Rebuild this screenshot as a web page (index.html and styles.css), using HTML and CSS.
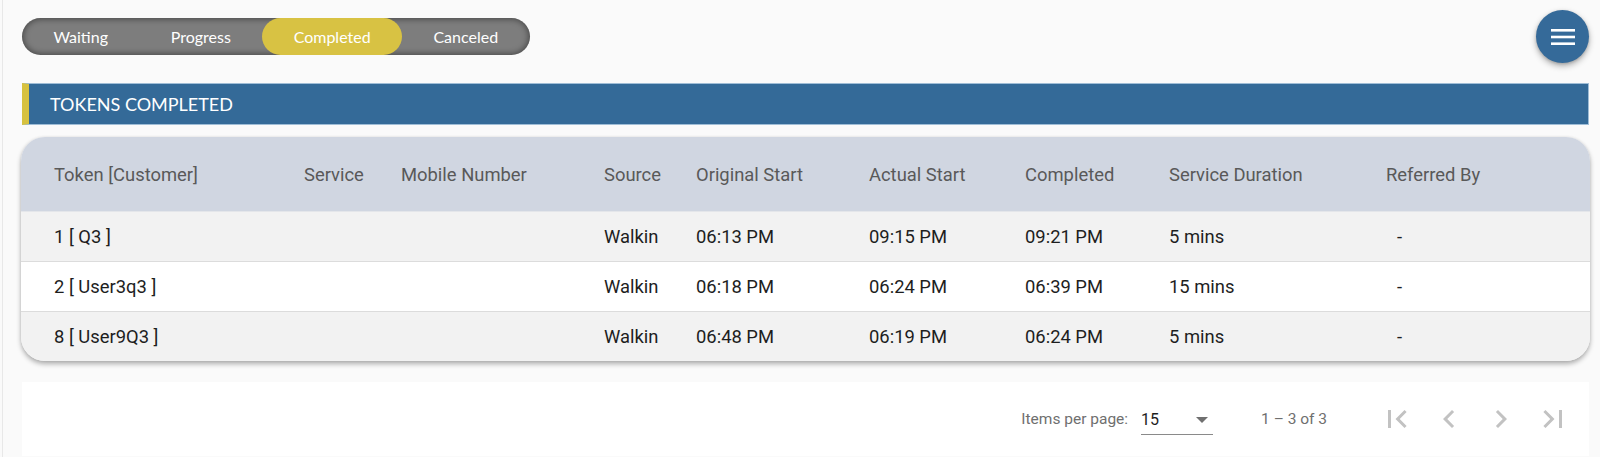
FILE: index.html
```html
<!DOCTYPE html>
<html>
<head>
<meta charset="utf-8">
<link rel="stylesheet" href="styles.css">
</head>
<body>
<div class="page">
  <div class="topbar">
    <div class="toggle">
      <span class="seg">Waiting</span>
      <span class="seg">Progress</span>
      <span class="seg active">Completed</span>
      <span class="seg">Canceled</span>
    </div>
  </div>
  <button class="fab" aria-label="menu">
    <svg width="24" height="18" viewBox="0 0 24 18"><rect x="0" y="1" width="24" height="2.6" fill="#fff"/><rect x="0" y="7.7" width="24" height="2.6" fill="#fff"/><rect x="0" y="14.4" width="24" height="2.6" fill="#fff"/></svg>
  </button>

  <div class="section-title">TOKENS COMPLETED</div>

  <div class="card">
    <div class="row head">
      <div>Token [Customer]</div>
      <div>Service</div>
      <div>Mobile Number</div>
      <div>Source</div>
      <div>Original Start</div>
      <div>Actual Start</div>
      <div>Completed</div>
      <div>Service Duration</div>
      <div>Referred By</div>
    </div>
    <div class="row odd">
      <div>1 [ Q3 ]</div>
      <div></div>
      <div></div>
      <div>Walkin</div>
      <div>06:13 PM</div>
      <div>09:15 PM</div>
      <div>09:21 PM</div>
      <div>5 mins</div>
      <div class="ref">-</div>
    </div>
    <div class="row even">
      <div>2 [ User3q3 ]</div>
      <div></div>
      <div></div>
      <div>Walkin</div>
      <div>06:18 PM</div>
      <div>06:24 PM</div>
      <div>06:39 PM</div>
      <div>15 mins</div>
      <div class="ref">-</div>
    </div>
    <div class="row odd last">
      <div>8 [ User9Q3 ]</div>
      <div></div>
      <div></div>
      <div>Walkin</div>
      <div>06:48 PM</div>
      <div>06:19 PM</div>
      <div>06:24 PM</div>
      <div>5 mins</div>
      <div class="ref">-</div>
    </div>
  </div>

  <div class="paginator">
    <span class="label">Items per page:</span>
    <div class="select">
      <span class="value">15</span>
      <span class="arrow"></span>
    </div>
    <span class="range">1 – 3 of 3</span>
    <div class="navs">
      <span class="nav"><svg width="36" height="36" viewBox="0 0 24 24"><path d="M18.41 16.59L13.82 12l4.59-4.59L17 6l-6 6 6 6zM6 6h2v12H6z"/></svg></span>
      <span class="nav"><svg width="36" height="36" viewBox="0 0 24 24"><path d="M15.41 7.41L14 6l-6 6 6 6 1.41-1.41L10.83 12z"/></svg></span>
      <span class="nav"><svg width="36" height="36" viewBox="0 0 24 24"><path d="M10 6L8.59 7.41 13.17 12l-4.58 4.59L10 18l6-6z"/></svg></span>
      <span class="nav"><svg width="36" height="36" viewBox="0 0 24 24"><path d="M5.59 7.41L10.18 12l-4.59 4.59L7 18l6-6-6-6zM16 6h2v12h-2z"/></svg></span>
    </div>
  </div>
</div>
</body>
</html>
```

FILE: styles.css
```css
html, body {
  margin: 0;
  padding: 0;
  background: #fafafa;
}

.page {
  position: relative;
  margin-left: 2px;
  border-left: 1px solid #e8e8e8;
  padding: 18px 11px 0 19px;
  height: 457px;
  box-sizing: border-box;
  font-family: Roboto, "Liberation Sans", sans-serif;
}

.topbar {
  display: flex;
  align-items: center;
  height: 37px;
}

.toggle {
  display: inline-flex;
  height: 37px;
  border-radius: 19px;
  background: #7d7d7d;
  box-shadow: inset 0 0 6px 1px rgba(0, 0, 0, 0.45);
  font-family: Lato, "Open Sans", sans-serif;
  font-size: 16px;
  color: #ffffff;
}

.seg {
  display: flex;
  align-items: center;
  padding: 0 31.4px;
  border-radius: 19px;
}

.seg.active {
  background: #d8c243;
}

.fab {
  position: absolute;
  top: 10px;
  right: 11px;
  width: 53px;
  height: 53px;
  border-radius: 50%;
  border: none;
  padding: 0;
  background: #356a99;
  box-shadow: 0 3px 6px rgba(0, 0, 0, 0.3), 0 1px 3px rgba(0, 0, 0, 0.15);
  display: flex;
  align-items: center;
  justify-content: center;
}

.section-title {
  margin-top: 28px;
  height: 42px;
  box-sizing: border-box;
  background: #346a98;
  border: 1px solid #9fbdd6;
  border-left: 7px solid #d7c23f;
  color: #ffffff;
  font-family: Lato, "Open Sans", sans-serif;
  font-size: 18px;
  display: flex;
  align-items: center;
  padding-left: 21px;
}

.card {
  margin-top: 12px;
  margin-left: -1px;
  margin-right: -1px;
  border-radius: 24px;
  overflow: hidden;
  box-shadow: 0 3px 5px rgba(0, 0, 0, 0.3), 0 0 3px rgba(0, 0, 0, 0.08);
}

.row {
  display: grid;
  grid-template-columns: 250px 97px 203px 92px 173px 156px 144px 217px 1fr;
  padding-left: 33px;
  align-items: center;
  height: 50px;
  box-sizing: border-box;
  font-size: 18.4px;
  color: #1e1e1e;
  border-top: 1px solid #dcdcdc;
}

.row.head {
  height: 74px;
  border-top: none;
  background: #d0d6e1;
  color: #595959;
  font-weight: 400;
}

.row.odd {
  background: #f2f2f2;
}

.row.even {
  background: #ffffff;
}

.row.head + .row {
  border-top: 1px solid #e4e6ea;
}

.ref {
  padding-left: 11px;
}

.paginator {
  margin-top: 21px;
  height: 74px;
  background: #ffffff;
  display: flex;
  align-items: center;
  justify-content: flex-end;
  padding-right: 16px;
  font-size: 15.5px;
  color: #6f6f6f;
}

.label {
  margin-right: 13px;
}

.select {
  width: 72px;
  height: 30px;
  box-sizing: border-box;
  border-bottom: 1px solid #8a8a8a;
  display: flex;
  align-items: center;
  justify-content: space-between;
  margin-top: 2px;
}

.value {
  color: #1e1e1e;
  font-size: 16px;
}

.arrow {
  width: 0;
  height: 0;
  border-left: 6px solid transparent;
  border-right: 6px solid transparent;
  border-top: 6px solid #707070;
  margin-right: 5px;
}

.range {
  margin-left: 48px;
  margin-right: 50px;
}

.navs {
  display: flex;
  gap: 12px;
}

.nav {
  width: 40px;
  height: 40px;
  display: flex;
  align-items: center;
  justify-content: center;
}

.nav svg {
  fill: #c2c2c2;
}
```
